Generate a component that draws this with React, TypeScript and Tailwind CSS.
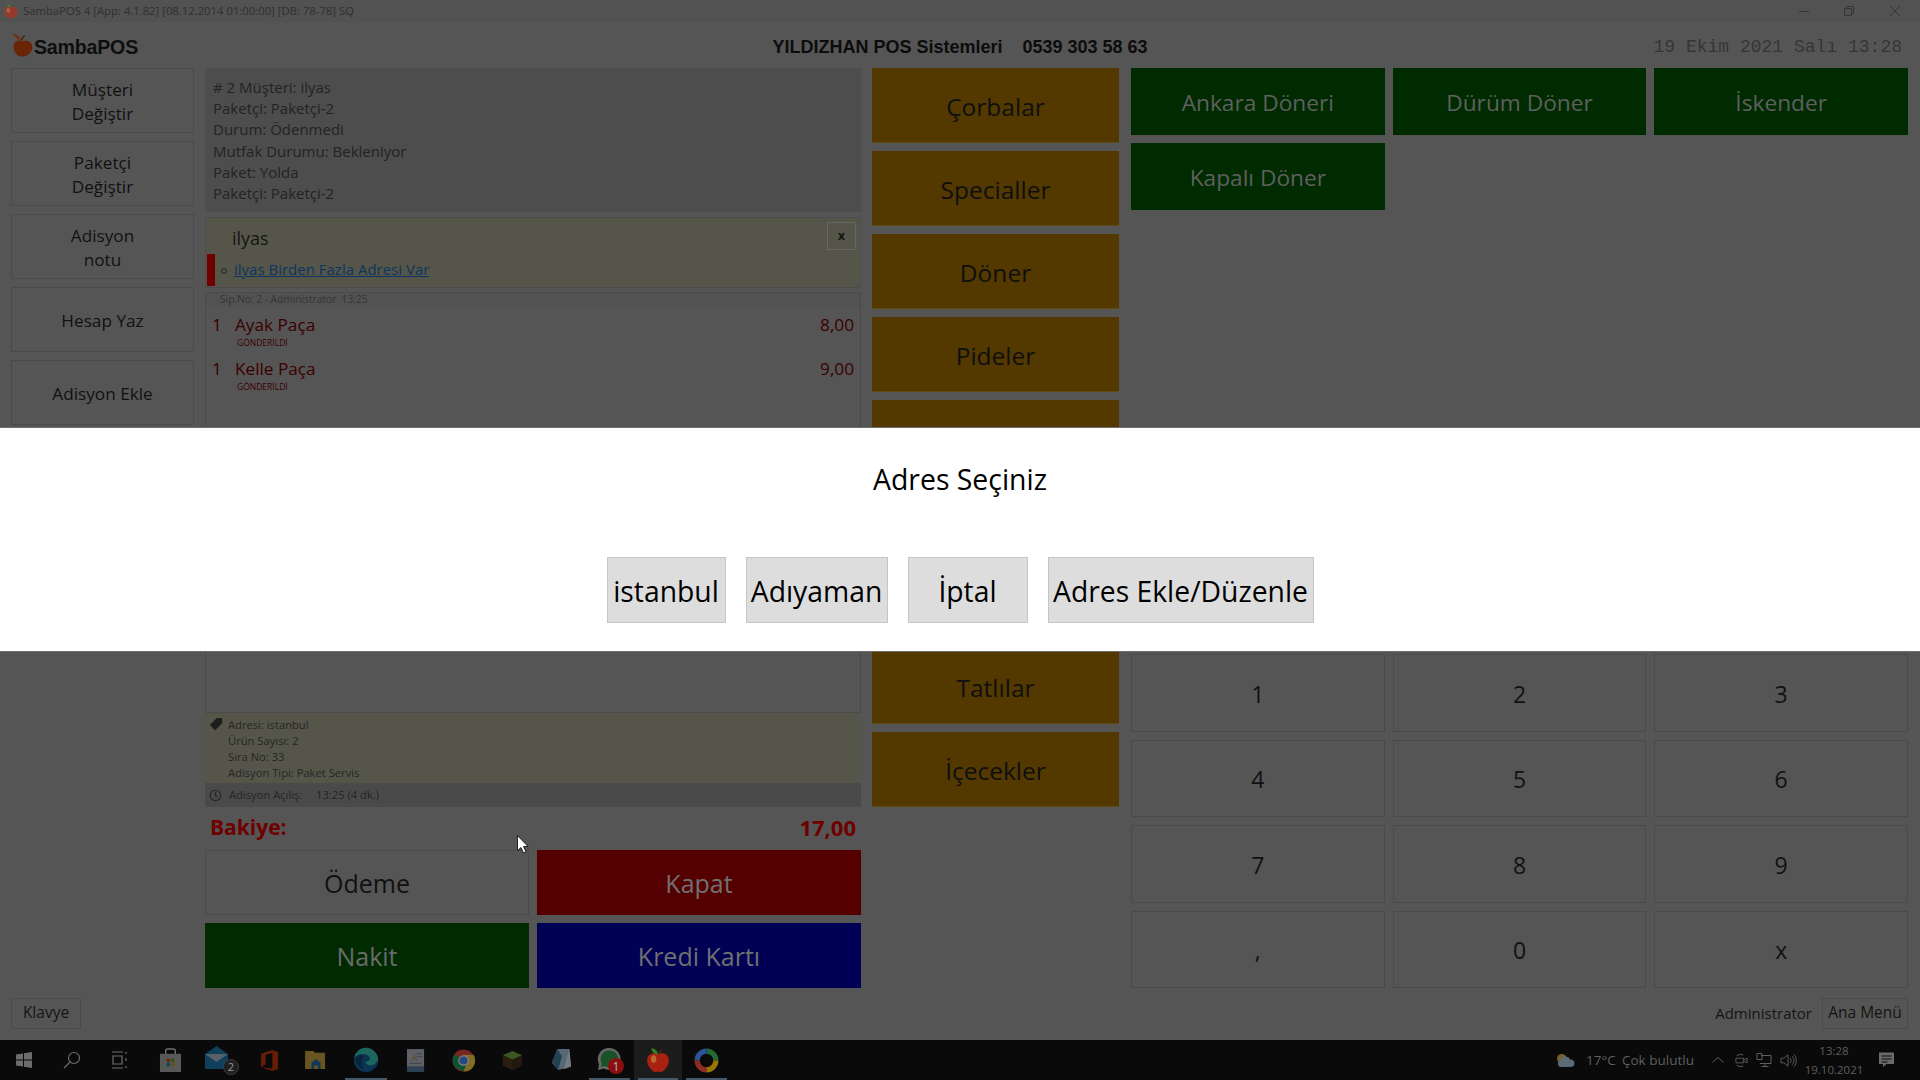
import React from "react";

const Apple = ({ className = "" }: { className?: string }) => (
  <svg viewBox="0 0 24 24" className={className}>
    <path d="M12 7C9 4.500 2 5.500 2 12.500 2 18 7 23.500 10 23 11 22.800 13 22.800 14 23 17 23.500 22 18 22 12.500 22 5.500 15 4.500 12 7Z" fill="#d8240e" />
    <ellipse cx="8" cy="11" rx="2.500" ry="3.500" fill="#f59a3a" opacity=".8" />
    <path d="M12 7C11.500 4 10 2 6 1 6 4 8 6.500 12 7Z" fill="#3fa52a" />
    <path d="M12.500 7C13 5 13.500 4 15 3" stroke="#6b3a10" strokeWidth="1.200" fill="none" />
  </svg>
);

const TaskIcon = ({ w = 49.3, children, active, line }: { w?: number; children: React.ReactNode; active?: boolean; line?: boolean }) => (
  <div className={`relative h-10 flex items-center justify-center shrink-0 ${active ? "bg-[#1c1c1c]" : ""}`} style={{ width: w }}>
    {children}
    {line && <div className="absolute bottom-0 left-[4px] right-[4px] h-[2px] bg-[#46596a]" />}
  </div>
);

const Btn = ({ children, className = "" }: { children: React.ReactNode; className?: string }) => (
  <div className={`flex items-center justify-center text-center ${className}`}>{children}</div>
);

const leftButtons = [["Müşteri", "Değiştir"], ["Paketçi", "Değiştir"], ["Adisyon", "notu"], ["Hesap Yaz"], ["Adisyon Ekle"]];
const categories = ["Çorbalar", "Specialler", "Döner", "Pideler", "", "", "", "Tatlılar", "İçecekler"];
const products = ["Ankara Döneri", "Dürüm Döner", "İskender", "Kapalı Döner"];
const keys = ["1", "2", "3", "4", "5", "6", "7", "8", "9", ",", "0", "x"];
const infoLines = ["# 2 Müşteri: ilyas", "Paketçi: Paketçi-2", "Durum: Ödenmedi", "Mutfak Durumu: Bekleniyor", "Paket: Yolda", "Paketçi: Paketçi-2"];
const orders = [["Ayak Paça", "8,00"], ["Kelle Paça", "9,00"]];
const tagLines = ["Adresi: istanbul", "Ürün Sayısı: 2", "Sıra No: 33", "Adisyon Tipi: Paket Servis"];
const modalButtons: [string, string][] = [["istanbul", "w-[119px]"], ["Adıyaman", "w-[142px]"], ["İptal", "w-[120px]"], ["Adres Ekle/Düzenle", "w-[266px]"]];

export default function App() {
  return (
    <div className="relative w-[1920px] h-[1080px] overflow-hidden flex flex-col bg-[#555555] font-['Open_Sans',sans-serif] text-[#111111]">
      {/* Title bar */}
      <div className="h-[22px] shrink-0 flex items-center bg-[#525252]">
        <Apple className="w-[16px] h-[16px] ml-[3px] mr-[4px] opacity-50" />
        <span className="text-[11.300px] text-[#303030] whitespace-nowrap">SambaPOS 4 [App: 4.1.82] [08.12.2014 01:00:00] [DB: 78-78] SQ</span>
        <div className="ml-auto flex items-center text-[#353535]">
          <svg viewBox="0 0 12 12" className="w-3 h-3 mr-[33px]"><path d="M1 6.500H11" stroke="currentColor" /></svg>
          <svg viewBox="0 0 12 12" className="w-3 h-3 mr-[34px]"><path d="M1.500 3.500H8.500V10.500H1.500ZM3.500 3.500V1.500H10.500V8.500H8.500" stroke="currentColor" fill="none" /></svg>
          <svg viewBox="0 0 12 12" className="w-3 h-3 mr-[19px]"><path d="M1 1L11 11M11 1L1 11" stroke="currentColor" /></svg>
        </div>
      </div>

      {/* Header */}
      <div className="relative h-[46px] shrink-0 flex items-center">
        <div className="ml-[11px] flex items-center">
          <svg viewBox="0 0 22 26" className="w-[22px] h-[25px] mt-[2px]">
            <path d="M11 9C7 7 1 8 2.500 16 3.500 22 8 25 11 24.500 15 25 21 21 21.500 16 22.500 8 15 7 11 9Z" fill="#6a2408" />
            <path d="M9 8C7 7 4 4 1 1L5 1.500C7 3 9 5 10 8Z" fill="#7a2c0c" />
            <path d="M10.500 8C10.500 6 12 4 14 3" stroke="#4a2008" strokeWidth="1.500" fill="none" />
          </svg>
          <span className="font-['Liberation_Sans',sans-serif] font-bold text-[19.600px] tracking-[-0.2px] text-[#0e0e0e] ml-[1px] mt-[6px]">SambaPOS</span>
        </div>
        <div className="absolute left-0 right-0 top-0 bottom-0 flex items-center justify-center pt-[5px]">
          <span className="font-['Liberation_Sans',sans-serif] font-bold text-[18px] text-[#0c0c0c] whitespace-pre">YILDIZHAN POS Sistemleri    0539 303 58 63</span>
        </div>
        <span className="ml-auto mr-[18px] font-['Liberation_Mono',monospace] text-[18px] text-[#353535] mt-[4px]">19 Ekim 2021 Salı 13:28</span>
      </div>

      {/* Main */}
      <div className="h-[920px] shrink-0 flex pl-[11px] pr-[12px]">
        {/* Left column */}
        <div className="w-[183px] shrink-0 flex flex-col gap-2 mr-[11px]">
          {leftButtons.map((lines) => (
            <Btn key={lines[0]} className="h-[65px] flex-col border border-[#4a4a4a] pt-[3px] text-[17.200px] leading-[24px]">
              {lines.map((l) => (
                <span key={l}>{l}</span>
              ))}
            </Btn>
          ))}
        </div>

        {/* Ticket */}
        <div className="w-[656px] shrink-0 flex flex-col mr-[11px]">
          <div className="h-[144px] bg-[#4d4d4d] pl-[8px] pt-[9px] text-[15px] leading-[21.200px] text-[#232323]">
            {infoLines.map((l, i) => (
              <div key={i}>{l}</div>
            ))}
          </div>
          <div className="relative h-[71px] mt-[5px] bg-[#55554a] border border-[#4c4c4c]">
            <div className="absolute left-[26px] top-[7px] text-[18px] text-[#151515]">ilyas</div>
            <div className="absolute left-[1px] top-[36px] w-[8px] h-[32px] bg-[#700000]" />
            <div className="absolute left-[15px] top-[50px] w-[6px] h-[6px] rounded-full border border-[#222222]" />
            <div className="absolute left-[28px] top-[40px] text-[15px] text-[#0c3560] underline">ilyas Birden Fazla Adresi Var</div>
            <div className="absolute right-[4px] top-[4px] w-[29px] h-[28px] border border-[#666666] flex items-center justify-center text-[12px] font-bold text-[#111111]">x</div>
          </div>
          <div className="h-[422px] mt-[4px] border border-[#4b4b4b] flex flex-col">
            <div className="h-[14px] pl-[14px] text-[10.200px] leading-[13px] text-[#353535] bg-[#525252]">Sip.No: 2 - Administrator&nbsp; 13:25</div>
            <div className="pt-[5px] pl-[6px] pr-[6px] text-[#3a0000]">
              {orders.map(([name, price]) => (
                <div key={name} className="h-[44px] relative">
                  <div className="flex items-center h-[26px] text-[17.200px]">
                    <span className="w-[23px]">1</span>
                    <span>{name}</span>
                    <span className="ml-auto">{price}</span>
                  </div>
                  <div className="pl-[25px] text-[8.500px] leading-[9px]">GÖNDERİLDİ</div>
                </div>
              ))}
            </div>
          </div>
          <div className="relative h-[70px] bg-[#55554a] pl-[23px] pt-[4px] text-[11.200px] leading-[16px] text-[#252525]">
            <svg viewBox="0 0 16 16" className="absolute left-[4px] top-[4px] w-[14px] h-[14px]"><path d="M9 1H15V7L7 15 1 9Z" fill="#1d1d1d" /></svg>
            {tagLines.map((l) => (
              <div key={l}>{l}</div>
            ))}
          </div>
          <div className="h-[24px] bg-[#4a4a4a] flex items-center pl-[4px] text-[11.200px] text-[#252525]">
            <svg viewBox="0 0 16 16" className="w-[13px] h-[13px]" fill="none" stroke="#252525" strokeWidth="1.300"><circle cx="8" cy="8" r="6.500" /><path d="M8 4V8.500L11 10" /></svg>
            <span className="w-[87px] ml-[7px]">Adisyon Açılış:</span>
            <span>13:25 (4 dk.)</span>
          </div>
          <div className="h-[43px] flex items-center justify-between pl-[5px] pr-[5px] pb-[2px] text-[21px] font-bold text-[#6e0000]">
            <span>Bakiye:</span>
            <span className="text-[22px]">17,00</span>
          </div>
          <div className="grid grid-cols-2 gap-x-2 gap-y-2 text-[25px]">
            <Btn className="h-[65px] pt-[2px] border border-[#4a4a4a]">Ödeme</Btn>
            <Btn className="h-[65px] pt-[2px] bg-[#550000] text-[#707070]">Kapat</Btn>
            <Btn className="h-[65px] pt-[2px] bg-[#002b00] text-[#6a6a6a]">Nakit</Btn>
            <Btn className="h-[65px] pt-[2px] bg-[#000055] text-[#707070]">Kredi Kartı</Btn>
          </div>
        </div>

        {/* Categories */}
        <div className="w-[247px] shrink-0 flex flex-col gap-2 mr-[12px]">
          {categories.map((c, i) => (
            <Btn key={i} className="h-[75px] pt-[4px] bg-[#533900] border-b border-[#5f4a10] text-[24.500px] text-[#0f0f0f]">{c}</Btn>
          ))}
        </div>

        {/* Products + numpad */}
        <div className="flex-1 flex flex-col justify-between">
          <div className="grid grid-cols-3 gap-x-2 gap-y-2 auto-rows-[67px]">
            {products.map((p) => (
              <Btn key={p} className="pt-[3px] bg-[#002b00] text-[22.700px] text-[#5f5f5f]">{p}</Btn>
            ))}
          </div>
          <div className="grid grid-cols-3 gap-x-2 gap-y-2 auto-rows-[77.500px]">
            {keys.map((k) => (
              <Btn key={k} className="pt-[2px] border border-[#4a4a4a] text-[23px]">{k}</Btn>
            ))}
          </div>
        </div>
      </div>

      {/* Bottom bar */}
      <div className="h-[52px] shrink-0 flex items-center pl-[11px] pr-[12px] pb-[2px] text-[15.500px] text-[#141414]">
        <Btn className="w-[70px] h-[31px] border border-[#4a4a4a]">Klavye</Btn>
        <span className="ml-auto mr-[10px] text-[15px]">Administrator</span>
        <Btn className="w-[86px] h-[31px] border border-[#4a4a4a]">Ana Menü</Btn>
      </div>

      {/* Taskbar */}
      <div className="h-10 shrink-0 bg-[#0a0a0a] flex items-center">
        <TaskIcon w={48}>
          <svg viewBox="0 0 16 16" className="w-4 h-4 opacity-40"><path d="M0 2.500L7 1.500V7.500H0ZM8 1.300L16 0V7.500H8ZM0 8.500H7V14.500L0 13.500ZM8 8.500H16V16L8 14.700Z" fill="#fff" /></svg>
        </TaskIcon>
        <TaskIcon w={48}>
          <svg viewBox="0 0 18 18" className="w-[18px] h-[18px] opacity-40" fill="none" stroke="#fff" strokeWidth="1.200"><circle cx="11" cy="7" r="5.500" /><path d="M7 11L1 17" /></svg>
        </TaskIcon>
        <TaskIcon w={48}>
          <svg viewBox="0 0 18 18" className="w-[18px] h-[18px] opacity-40" fill="none" stroke="#fff" strokeWidth="1.200"><path d="M1 1H12M1 17H12M2 5H11V13H2ZM15 1V3M15 7V10M15 15V17" /></svg>
        </TaskIcon>
        <TaskIcon w={52}>
          <svg viewBox="0 0 24 26" className="w-[23px] h-[25px] opacity-40">
            <path d="M7 7V3C7 1.500 8 1 9 1H15C16 1 17 1.500 17 3V7" stroke="#fff" strokeWidth="1.500" fill="none" />
            <path d="M1 6H23V25H1Z" fill="#ccc" />
            <path d="M8 11H11.500V14.500H8Z" fill="#f25022" /><path d="M12.500 11H16V14.500H12.500Z" fill="#7fba00" /><path d="M8 15.500H11.500V19H8Z" fill="#00a4ef" /><path d="M12.500 15.500H16V19H12.500Z" fill="#ffb900" />
          </svg>
        </TaskIcon>
        <TaskIcon w={52}>
          <svg viewBox="0 0 36 30" className="w-[36px] h-[30px]">
            <g opacity=".4"><path d="M1 9L12.500 1 24 9V24H1Z" fill="#1a8fd8" /><path d="M1 9H24L12.500 17Z" fill="#cfe4f4" /></g>
            <circle cx="27" cy="22" r="7.500" fill="#1f1f1f" stroke="#3c3c3c" />
            <text x="27" y="26" fontSize="11" fill="#9a9a9a" textAnchor="middle" fontFamily="Open Sans">2</text>
          </svg>
        </TaskIcon>
        <TaskIcon w={43}>
          <svg viewBox="0 0 20 24" className="w-[19px] h-[23px] opacity-40"><path d="M1 5L13 1 19 3V21L13 23 1 19 13 20.500V4L6 6V16L1 19Z" fill="#eb3c00" /></svg>
        </TaskIcon>
        <TaskIcon w={50}>
          <svg viewBox="0 0 24 22" className="w-[22px] h-[20px] opacity-40"><path d="M0 1H9L11 3H22V21H0Z" fill="#f4c542" /><path d="M7 14L12 10 17 14V21H14V17H10V21H7Z" fill="#1a7fd0" /></svg>
        </TaskIcon>
        <TaskIcon w={50} line>
          <svg viewBox="0 0 32 32" className="w-[26px] h-[30px] opacity-50"><circle cx="16" cy="16" r="15" fill="#0c5f9e" /><path d="M31 16C31 8 24 1 16 1 9 1 3 6 1.500 13 7 7 19 7 21 14 21 16 19 18 15 18 18 25 27 24 31 16Z" fill="#2fc1b0" /><path d="M3 14C5 10 11 9 14 12 10 14 9 20 13 27 8 26 4 21 3 14Z" fill="#0a0a0a" opacity=".35" /></svg>
        </TaskIcon>
        <TaskIcon w={48}>
          <svg viewBox="0 0 20 26" className="w-[19px] h-[25px] opacity-40"><path d="M1 1H19V23H1Z" fill="#dbe7f3" /><path d="M1 19H19V25H1Z" fill="#6a9ac8" /><text x="6" y="14" fontSize="9" fill="#e67a2a" fontFamily="Liberation Sans">A</text><path d="M11 6H17M11 9H17M4 16H16" stroke="#88a" /></svg>
        </TaskIcon>
        <TaskIcon w={49}>
          <svg viewBox="0 0 24 24" className="w-[23px] h-[23px] opacity-50"><circle cx="12" cy="12" r="11.500" fill="#db4437" /><path d="M2.500 6A11.500 11.500 0 0 0 3 18.500L12 23.500 17 14Z" fill="#0f9d58" /><path d="M12 6H22.500A11.500 11.500 0 0 1 12 23.500L16 14Z" fill="#ffcd40" /><circle cx="12" cy="12" r="5.500" fill="#fff" /><circle cx="12" cy="12" r="4.300" fill="#4285f4" /></svg>
        </TaskIcon>
        <TaskIcon w={49}>
          <svg viewBox="0 0 24 24" className="w-[21px] h-[21px] opacity-50"><path d="M12 1L23 6 12 11 1 6Z" fill="#6aa83a" /><path d="M1 6L12 11V23L1 18Z" fill="#4a3218" /><path d="M23 6L12 11V23L23 18Z" fill="#3a2612" /></svg>
        </TaskIcon>
        <TaskIcon w={48}>
          <svg viewBox="0 0 24 26" className="w-[22px] h-[24px] opacity-50"><path d="M8 1H21L23 20 9 24 2 16Z" fill="#9fc6dc" /><path d="M8 1L2 16 9 24 13 9Z" fill="#3a7a9a" /><path d="M21 1L23 20 15 23Z" fill="#e2edf2" /></svg>
        </TaskIcon>
        <TaskIcon w={49} line>
          <svg viewBox="0 0 30 30" className="w-[30px] h-[30px]">
            <g opacity=".45"><path d="M14 3A11 11 0 0 0 4 19L3 25 9 23.500A11 11 0 1 0 14 3Z" fill="#d8d8d8" /><path d="M14 5.500A8.500 8.500 0 0 0 6.500 18L6 22 10 21A8.500 8.500 0 1 0 14 5.500Z" fill="#2faa4d" /></g>
            <circle cx="21" cy="21" r="8" fill="#8b0f0f" />
            <text x="21" y="25.500" fontSize="12" fill="#b9b9b9" textAnchor="middle" fontFamily="Open Sans">1</text>
          </svg>
        </TaskIcon>
        <TaskIcon w={48} active line>
          <Apple className="w-[26px] h-[30px] opacity-75" />
        </TaskIcon>
        <TaskIcon w={49} line>
          <svg viewBox="0 0 24 24" className="w-[25px] h-[27px] opacity-60" fill="none" strokeWidth="5"><path d="M12 3A9 9 0 0 1 21 12" stroke="#34a853" /><path d="M3 12A9 9 0 0 1 12 3" stroke="#4285f4" /><path d="M12 21A9 9 0 0 1 3 12" stroke="#ea4335" /><path d="M21 12A9 9 0 0 1 12 21" stroke="#fbbc05" /></svg>
        </TaskIcon>

        {/* Tray */}
        <div className="ml-auto flex items-center text-[13.500px] text-[#5f5f5f]">
          <svg viewBox="0 0 22 16" className="w-[21px] h-[15px] opacity-50 mr-[10px]"><circle cx="7" cy="6" r="5" fill="#e8b54a" /><path d="M5 15A4 4 0 0 1 5 8 6 6 0 0 1 16 7 4 4 0 0 1 17 15Z" fill="#a9cbe0" /></svg>
          <span className="w-[36px]">17°C</span>
          <span className="w-[90px] whitespace-nowrap">Çok bulutlu</span>
          <svg viewBox="0 0 12 12" className="w-3 h-3 mr-[11px]" fill="none" stroke="currentColor"><path d="M0.500 8.500L6 3.500 11.500 8.500" /></svg>
          <svg viewBox="0 0 14 16" className="w-[13px] h-[15px] mr-[8px]" fill="none" stroke="currentColor"><path d="M2 3A6 6 0 0 1 9 2M2 13A6 6 0 0 0 9 14M1 5.500H9V10.500H1ZM9.500 7.500L13 5.500V10.500L9.500 8.500" /></svg>
          <svg viewBox="0 0 16 16" className="w-[16px] h-[16px] mr-[8px]" fill="none" stroke="currentColor"><path d="M5 3.500H15V11.500H4M1 1.500H6V7.500H1ZM9 11.500V14.500M5.500 14.500H12.500" /></svg>
          <svg viewBox="0 0 18 16" className="w-[17px] h-[15px] mr-[8px]" fill="none" stroke="currentColor"><path d="M1 5.500H4L8.500 2V14L4 10.500H1ZM11 5.500A4 4 0 0 1 11 10.500M13 3.500A7 7 0 0 1 13 12.500M15 1.500A10 10 0 0 1 15 14.500" /></svg>
          <div className="w-[58px] flex flex-col items-center text-[11.500px] leading-[19px]">
            <span>13:28</span>
            <span>19.10.2021</span>
          </div>
          <svg viewBox="0 0 16 16" className="w-[17px] h-[16px] ml-[15px] mr-[25px] text-[#6a6a6a]"><path d="M0.500 0.500H15.500V12H8L4.500 15V12H0.500Z" fill="currentColor" /><path d="M3 4H13M3 7H13M3 10H9" stroke="#0a0a0a" /></svg>
        </div>
      </div>

      {/* Dialog */}
      <div className="absolute left-0 right-0 top-[427px] h-[225px] bg-white border-y border-[#6e6e6e] flex flex-col items-center text-black">
        <div className="mt-[29px] text-[28.400px] leading-[44px]">Adres Seçiniz</div>
        <div className="mt-[56px] flex gap-[20px]">
          {modalButtons.map(([label, width]) => (
            <Btn key={label} className={`${width} h-[66px] pt-[3px] bg-[#dddddd] border border-[#c6c6c6] text-[28.300px] whitespace-nowrap`}>{label}</Btn>
          ))}
        </div>
      </div>

      {/* Cursor */}
      <svg viewBox="0 0 12 19" className="absolute left-[517px] top-[835px] w-[12px] h-[19px]"><path d="M0.500 0.500V15.500L4 12.500 6.500 18 9 17 6.500 11.500H11Z" fill="#fff" stroke="#000" strokeWidth=".8" /></svg>
    </div>
  );
}
